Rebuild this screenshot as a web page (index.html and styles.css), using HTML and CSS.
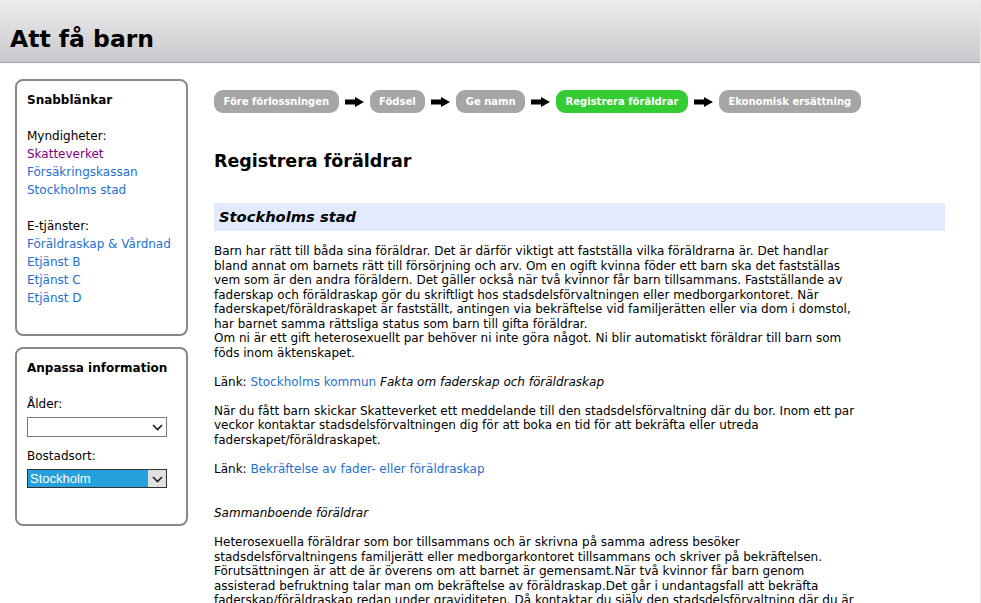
FILE: index.html
```html
<!DOCTYPE html>
<html lang="sv">
<head>
<meta charset="utf-8">
<title>Att få barn</title>
<link rel="stylesheet" href="styles.css">
</head>
<body>
<div class="page">
<header class="top">
  <h1 class="site-title">Att få barn</h1>
</header>
<div class="layout">
  <aside class="sidebar">
    <section class="box">
      <h2 class="box-title">Snabblänkar</h2>
      <p class="label">Myndigheter:</p>
      <ul class="link-list">
        <li><a href="#" class="visited">Skatteverket</a></li>
        <li><a href="#">Försäkringskassan</a></li>
        <li><a href="#">Stockholms stad</a></li>
      </ul>
      <p class="label gap">E-tjänster:</p>
      <ul class="link-list">
        <li><a href="#">Föräldraskap &amp; Vårdnad</a></li>
        <li><a href="#">Etjänst B</a></li>
        <li><a href="#">Etjänst C</a></li>
        <li><a href="#">Etjänst D</a></li>
      </ul>
    </section>
    <section class="box box-prefs">
      <h2 class="box-title">Anpassa information</h2>
      <label class="field-label" for="alder">Ålder:</label>
      <div class="select-wrap">
        <select id="alder" class="select"><option></option></select>
        <svg class="chev" width="11" height="7" viewBox="0 0 11 7"><polyline points="1,1 5.5,5.5 10,1" fill="none" stroke="#1e1e1e" stroke-width="1.6"/></svg>
      </div>
      <label class="field-label second" for="ort">Bostadsort:</label>
      <div class="select-wrap">
        <select id="ort" class="select select-active"><option>Stockholm</option></select>
        <svg class="chev" width="11" height="7" viewBox="0 0 11 7"><polyline points="1,1 5.5,5.5 10,1" fill="none" stroke="#1e1e1e" stroke-width="1.6"/></svg>
      </div>
    </section>
  </aside>
  <main class="content">
    <nav class="steps">
      <span class="step">Före förlossningen</span>
      <svg class="arrow" width="19" height="10" viewBox="0 0 19 10"><path d="M0 2.6h10V0l9 5-9 5V7.4H0z"/></svg>
      <span class="step">Födsel</span>
      <svg class="arrow" width="19" height="10" viewBox="0 0 19 10"><path d="M0 2.6h10V0l9 5-9 5V7.4H0z"/></svg>
      <span class="step">Ge namn</span>
      <svg class="arrow" width="19" height="10" viewBox="0 0 19 10"><path d="M0 2.6h10V0l9 5-9 5V7.4H0z"/></svg>
      <span class="step step-current">Registrera föräldrar</span>
      <svg class="arrow" width="19" height="10" viewBox="0 0 19 10"><path d="M0 2.6h10V0l9 5-9 5V7.4H0z"/></svg>
      <span class="step">Ekonomisk ersättning</span>
    </nav>
    <h1 class="page-title">Registrera föräldrar</h1>
    <h2 class="section-bar">Stockholms stad</h2>
    <div class="text">
      <p>Barn har rätt till båda sina föräldrar. Det är därför viktigt att fastställa vilka föräldrarna är. Det handlar bland annat om barnets rätt till försörjning och arv. Om en ogift kvinna föder ett barn ska det fastställas vem som är den andra föräldern. Det gäller också när två kvinnor får barn tillsammans. Fastställande av faderskap och föräldraskap gör du skriftligt hos stadsdelsförvaltningen eller medborgarkontoret. När faderskapet/föräldraskapet är fastställt, antingen via bekräftelse vid familjerätten eller via dom i domstol, har barnet samma rättsliga status som barn till gifta föräldrar.<br>Om ni är ett gift heterosexuellt par behöver ni inte göra något. Ni blir automatiskt föräldrar till barn som föds inom äktenskapet.</p>
      <p>Länk: <a href="#">Stockholms kommun</a> <em>Fakta om faderskap och föräldraskap</em></p>
      <p>När du fått barn skickar Skatteverket ett meddelande till den stadsdelsförvaltning där du bor. Inom ett par veckor kontaktar stadsdelsförvaltningen dig för att boka en tid för att bekräfta eller utreda faderskapet/föräldraskapet.</p>
      <p>Länk: <a href="#">Bekräftelse av fader- eller föräldraskap</a></p>
      <p class="subhead"><em>Sammanboende föräldrar</em></p>
      <p>Heterosexuella föräldrar som bor tillsammans och är skrivna på samma adress besöker stadsdelsförvaltningens familjerätt eller medborgarkontoret tillsammans och skriver på bekräftelsen. Förutsättningen är att de är överens om att barnet är gemensamt.När två kvinnor får barn genom assisterad befruktning talar man om bekräftelse av föräldraskap.Det går i undantagsfall att bekräfta faderskap/föräldraskap redan under graviditeten. Då kontaktar du själv den stadsdelsförvaltning där du är skriven.</p>
    </div>
  </main>
</div>
</div>
</body>
</html>
```

FILE: styles.css
```css
* { box-sizing: border-box; }

body {
  margin: 0;
  background: #fff;
  color: #000;
  font-family: "DejaVu Sans", Verdana, sans-serif;
  font-size: 12px;
}

.page {
  width: 981px;
  min-height: 100vh;
  border-right: 1px solid #e6e6e6;
}

a { color: #1f6fd0; text-decoration: none; }
a.visited { color: #800080; }

.top {
  height: 63px;
  padding: 24px 0 0 10px;
  background: linear-gradient(#eeeeee, #c8c7cc);
  border-bottom: 1px solid #a2a2a6;
}

.site-title {
  margin: 0;
  font-size: 23.5px;
  line-height: 30px;
  font-weight: bold;
}

.layout {
  display: flex;
  align-items: flex-start;
  gap: 26px;
  padding: 16px 0 0 15px;
}

.sidebar {
  width: 173px;
  flex: none;
  display: flex;
  flex-direction: column;
  gap: 11px;
}

.box {
  border: 2px solid #888;
  border-radius: 8px;
  padding: 10px 10px 27px;
  font-size: 12px;
  line-height: 18px;
}

.box-title {
  margin: 0 0 18px;
  font-size: 12px;
  line-height: 18px;
  font-weight: bold;
}

.label { margin: 0; }
.label.gap { margin-top: 18px; }

.link-list {
  list-style: none;
  margin: 0;
  padding: 0;
}

.box-prefs { padding-bottom: 36px; }

.field-label { display: block; }
.field-label.second { margin-top: 10px; }

.select-wrap {
  position: relative;
  width: 140px;
  margin-top: 4px;
}

.select {
  display: block;
  width: 140px;
  height: 20px;
  margin: 0;
  padding: 0 0 0 2px;
  appearance: none;
  -webkit-appearance: none;
  border: 1px solid #7a7a7a;
  border-radius: 0;
  background: #fff;
  font-family: "Liberation Sans", Arial, sans-serif;
  font-size: 13px;
  color: #000;
}

.select-active {
  height: 19px;
  border-color: #333;
  color: #fff;
  background: linear-gradient(to right, #26a0da 0 120px, #e1e1e1 120px);
}

.chev {
  position: absolute;
  right: 4px;
  top: 7px;
}

.content {
  width: 731px;
  flex: none;
}

.steps {
  display: flex;
  align-items: center;
  gap: 6px;
  margin-top: 11px;
}

.step {
  height: 23px;
  padding: 0 9.5px;
  border-radius: 9px;
  background: #a6a6a6;
  color: #fff;
  font-size: 10px;
  line-height: 23px;
  font-weight: bold;
  white-space: nowrap;
}

.step-current { background: #33cc33; }

.arrow { flex: none; }

.page-title {
  margin: 36px 0 0;
  font-size: 17.5px;
  line-height: 24px;
  font-weight: bold;
}

.section-bar {
  margin: 30px 0 0;
  height: 28px;
  padding: 0 5px;
  background: #e2ebfd;
  font-size: 14.7px;
  line-height: 28px;
  font-weight: bold;
  font-style: italic;
}

.text {
  max-width: 650px;
  margin-top: 13px;
  line-height: 14.5px;
}

.text p { margin: 0 0 14.5px; }
.text p.subhead { margin-top: 30px; }
```
